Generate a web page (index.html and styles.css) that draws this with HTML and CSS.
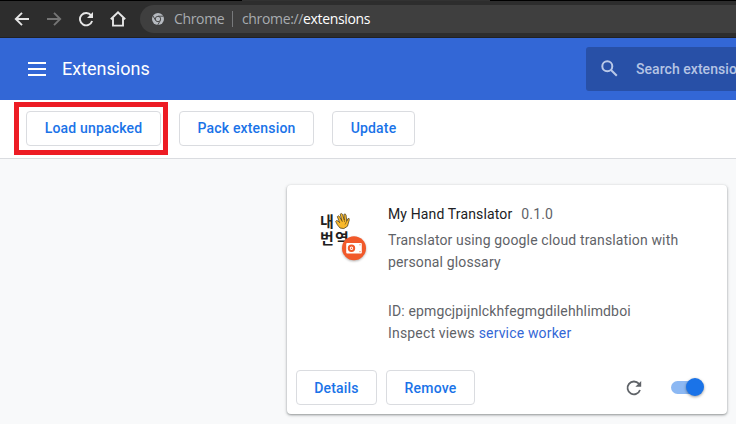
FILE: index.html
```html
<!DOCTYPE html>
<html lang="en">
<head>
<meta charset="utf-8">
<title>Extensions</title>
<link rel="stylesheet" href="styles.css">
</head>
<body>
<div class="browser">
  <svg class="nav-icon" viewBox="0 0 16 16"><path d="M15 8H2M8 1.8L1.8 8L8 14.2"/></svg>
  <svg class="nav-icon muted" viewBox="0 0 16 16"><path d="M1 8H14M8 1.8L14.2 8L8 14.2"/></svg>
  <svg class="nav-icon" viewBox="0 0 16 16"><path d="M14.1 10A6.2 6.2 0 1 1 13.1 4.4L14 5.6"/><path class="solid" d="M15 1V7H9Z"/></svg>
  <svg class="nav-icon" viewBox="0 0 16 16"><path d="M.8 8.2L8 1.3L15.2 8.2M3 7V14.6H13V7"/></svg>
  <div class="address">
    <svg class="chrome-icon" viewBox="0 0 12 12"><circle cx="6" cy="6" r="6"/><path d="M6 3.2H11.4M3.6 7.4L.9 2.8M8.4 7.4L5.7 12"/><circle class="ring" cx="6" cy="6" r="2.7"/></svg>
    <span class="origin">Chrome</span>
    <span class="divider"></span>
    <span class="url">chrome://<b>extensions</b></span>
  </div>
</div>
<header class="header">
  <div class="menu"><i></i><i></i><i></i></div>
  <h1>Extensions</h1>
  <div class="search">
    <svg viewBox="0 0 17 17"><circle cx="6.3" cy="6.3" r="5"/><path d="M10 10L15.8 15.8"/></svg>
    <span>Search extensions</span>
  </div>
</header>
<div class="toolbar">
  <div class="highlighted"><button class="load">Load unpacked</button></div>
  <button class="pack">Pack extension</button>
  <button class="update">Update</button>
</div>
<main>
  <article class="card">
    <div class="content">
      <div class="logo">
        <svg viewBox="0 0 50 52">
          <text class="hangul" x="0" y="14.5">내</text>
          <text class="hangul" x="0" y="31.5">번</text>
          <text class="hangul" x="15" y="31.5">역</text>
          <path class="hand" d="M20 16Q17 13 15.7 9.5Q16.2 7.8 18 9L19.7 10.7L17.3 4.7Q18 3 19.4 4.4L21.8 8.6L20.2 2.2Q21.2.8 22.5 2.3L24.3 8L23.9 2.4Q25.2 1.2 26 2.8L26.8 9Q27.3 6.1 29.1 6.4Q29.6 8 28.7 10L27.5 14.2Q24 18 20 16Z"/>
          <path class="lines" d="M21.8 8.6L22.5 10M24.3 8L24.6 10M26.8 9L25 12.5"/>
          <circle class="badge" cx="34" cy="36.2" r="12"/>
          <rect class="device" x="26.2" y="31" width="15.6" height="10.5" rx="1"/>
          <circle class="lens" cx="31.5" cy="36.2" r="2.7"/>
          <circle class="dot" cx="31.5" cy="36.2" r=".8"/>
          <path class="port" d="M40 32.3v1M40 39.2v1"/>
        </svg>
      </div>
      <div class="details">
        <div class="title"><span class="name">My Hand Translator</span><span class="version">0.1.0</span></div>
        <div class="description"><div class="d1">Translator using google cloud translation with</div><div class="d2">personal glossary</div></div>
        <div class="id">ID: epmgcjpijnlckhfegmgdilehhlimdboi</div>
        <div class="views">Inspect views <a>service worker</a></div>
      </div>
    </div>
    <div class="actions">
      <button class="more">Details</button>
      <button class="remove">Remove</button>
      <svg class="reload" viewBox="0 0 16 16"><path d="M14 10A6.4 6.4 0 1 1 12.8 3.7L14 5"/><path class="solid" d="M15.2 1V6.8H9.4Z"/></svg>
      <div class="toggle"><i></i></div>
    </div>
  </article>
</main>
</body>
</html>
```

FILE: styles.css
```css
* { box-sizing: border-box; }
body { margin: 0; width: 736px; height: 424px; overflow: hidden; background: #f8f9fa; font: 14px/20px Roboto, sans-serif; color: #5f6368; }
button { height: 35px; padding: 0 0 1px; border: 1px solid #dadce0; border-radius: 4px; background: #fff; color: #1a73e8; font: 500 14px/20px Roboto, sans-serif; letter-spacing: .18px; white-space: nowrap; }
svg { display: block; flex: none; }

.browser { height: 38px; display: flex; align-items: center; padding-left: 14px; background: linear-gradient(90deg, #000 242px, #323232 242px 490px, #000 490px) 0 0 / 100% 1px no-repeat, #2d2d2d; border-bottom: 1px solid #202124; }
.nav-icon { width: 16px; height: 16px; margin-right: 16px; fill: none; stroke: #e6e6e6; stroke-width: 1.9; }
.nav-icon.muted { stroke: #757575; }
.nav-icon .solid { fill: #e6e6e6; stroke: none; }
.address { flex: 1; height: 28px; margin-left: -2px; padding-left: 12px; display: flex; align-items: center; border-radius: 14px 0 0 14px; background: #3f3f3f; color: #a8acb0; font: 14px/20px "Open Sans", sans-serif; }
.chrome-icon { width: 12px; height: 12px; fill: #b6bac0; }
.chrome-icon path, .chrome-icon .ring { stroke: #3f3f3f; stroke-width: .9; }
.origin { width: 50px; margin-left: 10px; letter-spacing: -.35px; }
.divider { width: 1px; height: 16px; margin: 0 9px 0 8px; background: #77797b; }
.url { letter-spacing: -.35px; white-space: nowrap; }
.url b { color: #fff; font-weight: 400; }

.header { height: 62px; display: flex; align-items: center; padding-left: 28px; background: #3367d6; color: #fff; }
.menu { width: 18px; display: flex; flex-direction: column; gap: 4px; }
.menu i { height: 2px; background: #fff; }
h1 { width: 524px; margin: 0 0 0 16px; font-size: 18px; line-height: 24px; font-weight: 400; letter-spacing: 0; }
.search { flex: 1; height: 44px; overflow: hidden; display: flex; align-items: center; padding-left: 15px; border-radius: 3px 0 0 3px; background: #2850a7; color: #b5c4e4; font-weight: 500; white-space: nowrap; letter-spacing: .05px; }
.search svg { width: 17px; height: 17px; margin: -1px 18px 0 0; fill: none; stroke: #b9c8e8; stroke-width: 2; }

.toolbar { height: 59px; display: flex; align-items: flex-start; padding: 2px 0 0 14px; background: #fff; border-bottom: 1px solid #dadce0; }
.highlighted { width: 154px; height: 53px; padding: 4px 0 0 7px; border: 5px solid #ed1c24; }
.toolbar > button { margin-top: 9px; }
.load { width: 135px; }
.pack { width: 135px; margin-left: 11px; }
.update { width: 83px; margin-left: 18px; }

main { padding: 26px 0 0 287px; }
.card { width: 440px; height: 229px; display: flex; flex-direction: column; border-radius: 4px; background: #fff; box-shadow: 0 1px 2px rgba(60,64,67,.4), 0 1px 3px 1px rgba(60,64,67,.15); }
.content { flex: 1; display: flex; padding: 19px 0 0 33px; }
.logo { width: 68px; padding-top: 8px; }
.logo svg { width: 50px; height: 52px; overflow: visible; }
.hangul { font: 700 15px "Noto Sans CJK KR", sans-serif; fill: #202020; }
.hand { fill: #f9b92b; stroke: #3d331d; stroke-width: .7; }
.lines { fill: none; stroke: #3d331d; stroke-width: .5; }
.badge { fill: #f1592a; filter: drop-shadow(0 1px 1px rgba(0,0,0,.3)); }
.device { fill: #fff; }
.lens { fill: #fff; stroke: #f1592a; stroke-width: 2; }
.dot { fill: #f1592a; }
.port { stroke: #f1592a; stroke-width: 1; }
.details { white-space: nowrap; letter-spacing: .14px; line-height: 22px; }
.title { line-height: 20px; }
.name { color: #202124; }
.version { margin-left: 9px; }
.description { margin: 5px 0 27px; }
.views { letter-spacing: .17px; }
.views a { color: #3367d6; }
.actions { height: 44px; display: flex; padding-left: 9px; }
.actions button { padding-bottom: 0; }
.more { width: 81px; }
.remove { width: 89px; margin-left: 9px; }
.reload { width: 16px; height: 16px; margin: 10px 0 0 151px; fill: none; stroke: #5f6368; stroke-width: 1.8; }
.reload .solid { fill: #5f6368; stroke: none; }
.toggle { width: 32px; height: 13px; margin: 11px 0 0 29px; border-radius: 7px; background: #8cb8f3; }
.toggle i { display: block; width: 18px; height: 18px; margin: -3px 0 0 15px; border-radius: 50%; background: #1a73e8; box-shadow: 0 1px 3px rgba(0,0,0,.4); }
```
